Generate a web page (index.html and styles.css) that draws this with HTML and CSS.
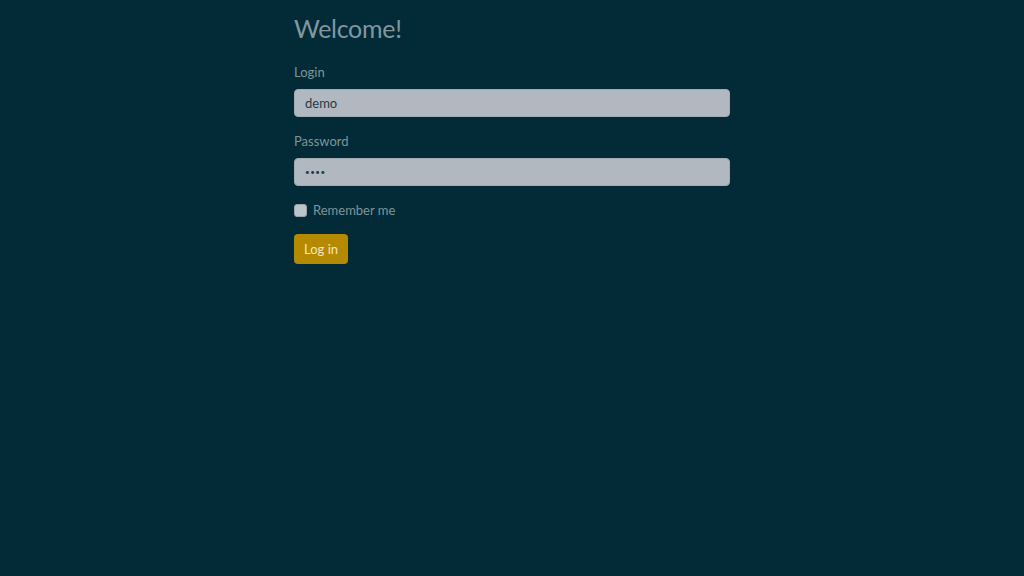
FILE: index.html
```html
<!DOCTYPE html>
<html lang="en">
<head>
    <meta charset="UTF-8">
    <meta name="viewport" content="width=device-width, initial-scale=1.0">
    <title>Log in</title>
    <link rel="stylesheet" href="styles.css">
</head>
<body>
    <div class="container">
        <h1>Welcome!</h1>
        <form class="login-form">
            <label for="login">Login</label>
            <input type="text" id="login" value="demo">
            <label for="password">Password</label>
            <input type="password" id="password" class="secret" value="demo">
            <div class="remember">
                <input type="checkbox" id="remember">
                <label for="remember">Remember me</label>
            </div>
            <button type="submit">Log in</button>
        </form>
    </div>
</body>
</html>
```

FILE: styles.css
```css
html { background-color: #022b37; }
body { font-family: Lato, "Open Sans", sans-serif; margin: 0; background-color: #022b37; color: #7f9597; }
.container { width: 436px; margin: 0 auto; padding-top: 12px; }
h1 { font-size: 25px; font-weight: 400; margin: 0 0 20px 0; line-height: 32px; letter-spacing: -0.3px; color: #8097a0; }
.login-form { display: flex; flex-direction: column; align-items: flex-start; }
.login-form > label { font-size: 13px; line-height: 16px; margin-bottom: 9px; }
.login-form > input { width: 100%; box-sizing: border-box; height: 28px; border: 1px solid #a3acb2; border-radius: 4px; background-color: #b1b8bf; color: #1f3b44; font-family: inherit; font-size: 13px; padding: 0 10px; margin: 0 0 16px 0; }
.login-form > input.secret { font-size: 8px; letter-spacing: 0.5px; }
.remember { display: flex; align-items: center; }
.remember input { appearance: none; width: 13px; height: 13px; margin: 0 6px 0 0; border-radius: 3px; background-color: #bcc4c9; border: 1px solid #98a4aa; }
.remember label { font-size: 13px; }
button { margin-top: 16px; height: 30px; padding: 0 10px; border: none; border-radius: 4px; background-color: #b68a00; color: #f3e6c2; font-family: inherit; font-size: 13px; cursor: pointer; }
```
